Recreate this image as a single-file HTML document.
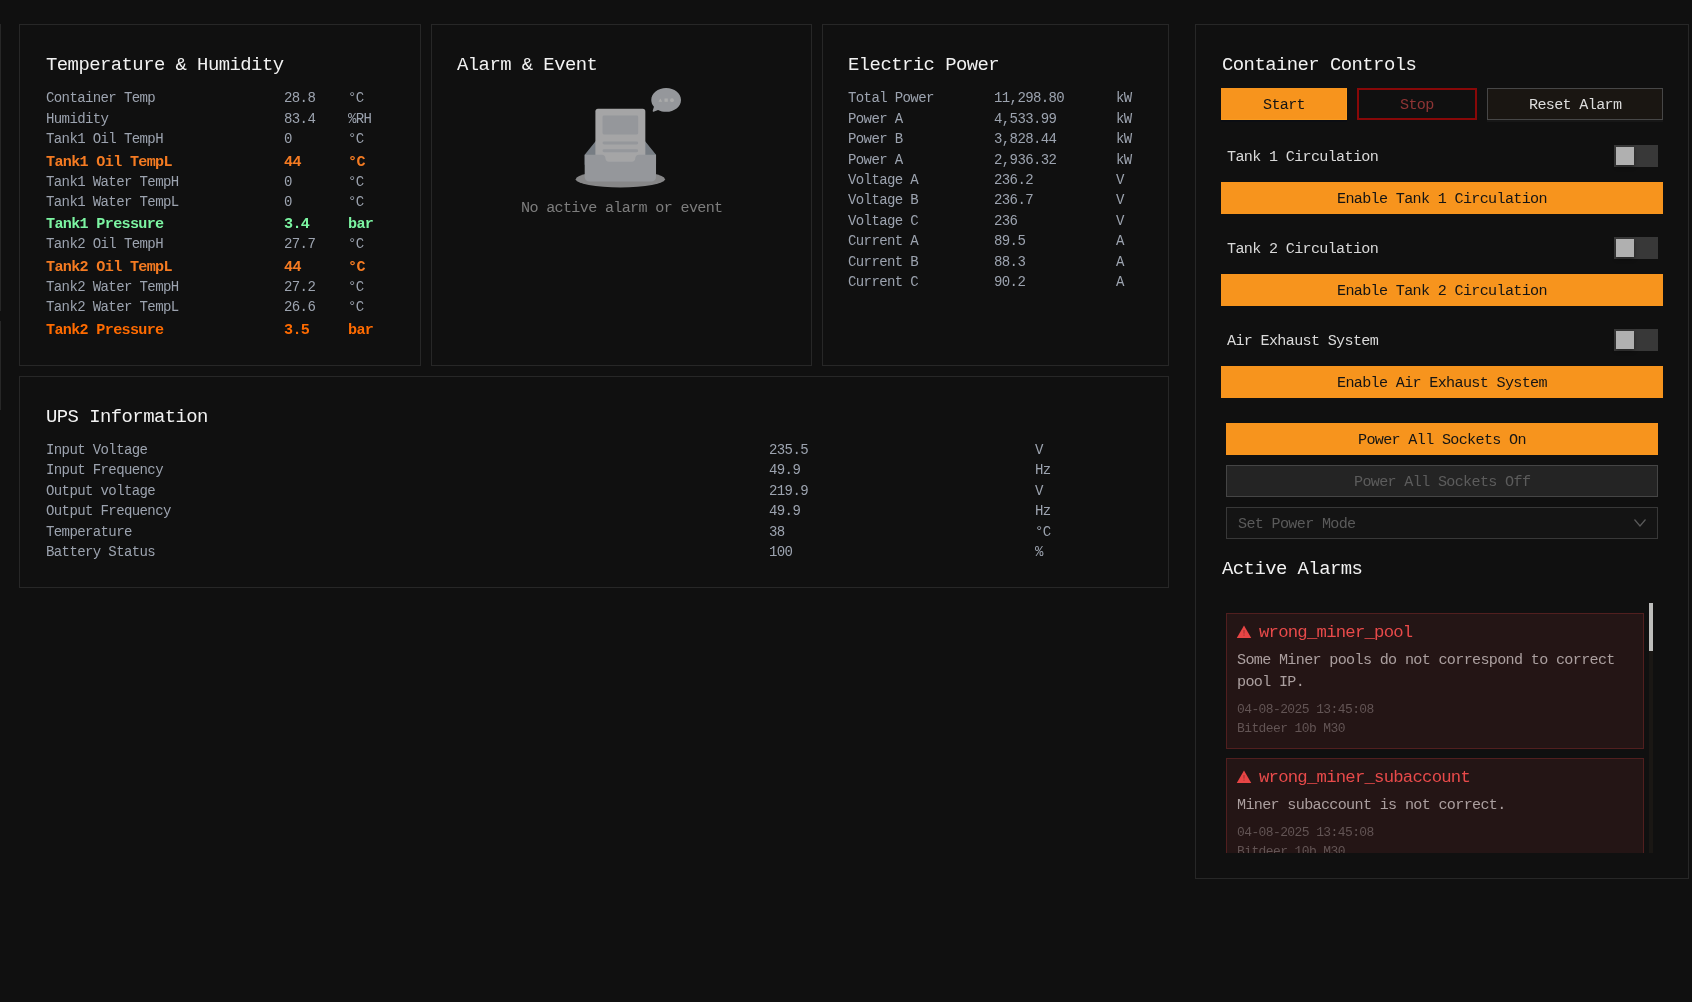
<!DOCTYPE html>
<html><head><meta charset="utf-8"><style>
html,body{margin:0;padding:0;background:#101010;width:1692px;height:1002px;overflow:hidden}
.t{position:absolute;white-space:pre;font-family:'Liberation Mono', monospace;will-change:transform}
.b{position:absolute}
</style></head><body>
<div class="b" style="left:0px;top:24px;width:1px;height:287px;background:#272727"></div>
<div class="b" style="left:0px;top:321px;width:1px;height:89px;background:#272727"></div>
<div class="b" style="left:19px;top:24px;width:402px;height:342px;border:1px solid #272727;box-sizing:border-box"></div>
<div class="b" style="left:431px;top:24px;width:381px;height:342px;border:1px solid #272727;box-sizing:border-box"></div>
<div class="b" style="left:822px;top:24px;width:347px;height:342px;border:1px solid #272727;box-sizing:border-box"></div>
<div class="b" style="left:19px;top:376px;width:1150px;height:212px;border:1px solid #272727;box-sizing:border-box"></div>
<div class="b" style="left:1195px;top:24px;width:494px;height:855px;border:1px solid #272727;box-sizing:border-box"></div>
<div class="t" style="left:46px;top:54px;font-size:18.90px;line-height:23px;letter-spacing:-0.542px;color:#f2f2f2;font-weight:normal;">Temperature &amp; Humidity</div>
<div class="t" style="left:457px;top:54px;font-size:18.90px;line-height:23px;letter-spacing:-0.542px;color:#f2f2f2;font-weight:normal;">Alarm &amp; Event</div>
<div class="t" style="left:848px;top:54px;font-size:18.90px;line-height:23px;letter-spacing:-0.542px;color:#f2f2f2;font-weight:normal;">Electric Power</div>
<div class="t" style="left:1222px;top:54px;font-size:18.90px;line-height:23px;letter-spacing:-0.542px;color:#f2f2f2;font-weight:normal;">Container Controls</div>
<div class="t" style="left:46px;top:406px;font-size:18.90px;line-height:23px;letter-spacing:-0.542px;color:#f2f2f2;font-weight:normal;">UPS Information</div>
<div class="t" style="left:1222px;top:558px;font-size:18.90px;line-height:23px;letter-spacing:-0.542px;color:#f2f2f2;font-weight:normal;">Active Alarms</div>
<div class="t" style="left:46px;top:90px;font-size:14.04px;line-height:17px;letter-spacing:-0.625px;color:#9ca3af;font-weight:normal;">Container Temp</div>
<div class="t" style="left:284px;top:90px;font-size:14.04px;line-height:17px;letter-spacing:-0.625px;color:#9ca3af;font-weight:normal;">28.8</div>
<div class="t" style="left:348px;top:90px;font-size:14.04px;line-height:17px;letter-spacing:-0.625px;color:#9ca3af;font-weight:normal;">°C</div>
<div class="t" style="left:46px;top:111px;font-size:14.04px;line-height:17px;letter-spacing:-0.625px;color:#9ca3af;font-weight:normal;">Humidity</div>
<div class="t" style="left:284px;top:111px;font-size:14.04px;line-height:17px;letter-spacing:-0.625px;color:#9ca3af;font-weight:normal;">83.4</div>
<div class="t" style="left:348px;top:111px;font-size:14.04px;line-height:17px;letter-spacing:-0.625px;color:#9ca3af;font-weight:normal;">%RH</div>
<div class="t" style="left:46px;top:131px;font-size:14.04px;line-height:17px;letter-spacing:-0.625px;color:#9ca3af;font-weight:normal;">Tank1 Oil TempH</div>
<div class="t" style="left:284px;top:131px;font-size:14.04px;line-height:17px;letter-spacing:-0.625px;color:#9ca3af;font-weight:normal;">0</div>
<div class="t" style="left:348px;top:131px;font-size:14.04px;line-height:17px;letter-spacing:-0.625px;color:#9ca3af;font-weight:normal;">°C</div>
<div class="t" style="left:46px;top:153px;font-size:15.12px;line-height:18px;letter-spacing:-0.673px;color:#f57b22;font-weight:bold;">Tank1 Oil TempL</div>
<div class="t" style="left:284px;top:153px;font-size:15.12px;line-height:18px;letter-spacing:-0.673px;color:#f57b22;font-weight:bold;">44</div>
<div class="t" style="left:348px;top:153px;font-size:15.12px;line-height:18px;letter-spacing:-0.673px;color:#f57b22;font-weight:bold;">°C</div>
<div class="t" style="left:46px;top:174px;font-size:14.04px;line-height:17px;letter-spacing:-0.625px;color:#9ca3af;font-weight:normal;">Tank1 Water TempH</div>
<div class="t" style="left:284px;top:174px;font-size:14.04px;line-height:17px;letter-spacing:-0.625px;color:#9ca3af;font-weight:normal;">0</div>
<div class="t" style="left:348px;top:174px;font-size:14.04px;line-height:17px;letter-spacing:-0.625px;color:#9ca3af;font-weight:normal;">°C</div>
<div class="t" style="left:46px;top:194px;font-size:14.04px;line-height:17px;letter-spacing:-0.625px;color:#9ca3af;font-weight:normal;">Tank1 Water TempL</div>
<div class="t" style="left:284px;top:194px;font-size:14.04px;line-height:17px;letter-spacing:-0.625px;color:#9ca3af;font-weight:normal;">0</div>
<div class="t" style="left:348px;top:194px;font-size:14.04px;line-height:17px;letter-spacing:-0.625px;color:#9ca3af;font-weight:normal;">°C</div>
<div class="t" style="left:46px;top:215px;font-size:15.12px;line-height:18px;letter-spacing:-0.673px;color:#7cf5a2;font-weight:bold;">Tank1 Pressure</div>
<div class="t" style="left:284px;top:215px;font-size:15.12px;line-height:18px;letter-spacing:-0.673px;color:#7cf5a2;font-weight:bold;">3.4</div>
<div class="t" style="left:348px;top:215px;font-size:15.12px;line-height:18px;letter-spacing:-0.673px;color:#7cf5a2;font-weight:bold;">bar</div>
<div class="t" style="left:46px;top:236px;font-size:14.04px;line-height:17px;letter-spacing:-0.625px;color:#9ca3af;font-weight:normal;">Tank2 Oil TempH</div>
<div class="t" style="left:284px;top:236px;font-size:14.04px;line-height:17px;letter-spacing:-0.625px;color:#9ca3af;font-weight:normal;">27.7</div>
<div class="t" style="left:348px;top:236px;font-size:14.04px;line-height:17px;letter-spacing:-0.625px;color:#9ca3af;font-weight:normal;">°C</div>
<div class="t" style="left:46px;top:258px;font-size:15.12px;line-height:18px;letter-spacing:-0.673px;color:#f57b22;font-weight:bold;">Tank2 Oil TempL</div>
<div class="t" style="left:284px;top:258px;font-size:15.12px;line-height:18px;letter-spacing:-0.673px;color:#f57b22;font-weight:bold;">44</div>
<div class="t" style="left:348px;top:258px;font-size:15.12px;line-height:18px;letter-spacing:-0.673px;color:#f57b22;font-weight:bold;">°C</div>
<div class="t" style="left:46px;top:279px;font-size:14.04px;line-height:17px;letter-spacing:-0.625px;color:#9ca3af;font-weight:normal;">Tank2 Water TempH</div>
<div class="t" style="left:284px;top:279px;font-size:14.04px;line-height:17px;letter-spacing:-0.625px;color:#9ca3af;font-weight:normal;">27.2</div>
<div class="t" style="left:348px;top:279px;font-size:14.04px;line-height:17px;letter-spacing:-0.625px;color:#9ca3af;font-weight:normal;">°C</div>
<div class="t" style="left:46px;top:299px;font-size:14.04px;line-height:17px;letter-spacing:-0.625px;color:#9ca3af;font-weight:normal;">Tank2 Water TempL</div>
<div class="t" style="left:284px;top:299px;font-size:14.04px;line-height:17px;letter-spacing:-0.625px;color:#9ca3af;font-weight:normal;">26.6</div>
<div class="t" style="left:348px;top:299px;font-size:14.04px;line-height:17px;letter-spacing:-0.625px;color:#9ca3af;font-weight:normal;">°C</div>
<div class="t" style="left:46px;top:321px;font-size:15.12px;line-height:18px;letter-spacing:-0.673px;color:#ff6b00;font-weight:bold;">Tank2 Pressure</div>
<div class="t" style="left:284px;top:321px;font-size:15.12px;line-height:18px;letter-spacing:-0.673px;color:#ff6b00;font-weight:bold;">3.5</div>
<div class="t" style="left:348px;top:321px;font-size:15.12px;line-height:18px;letter-spacing:-0.673px;color:#ff6b00;font-weight:bold;">bar</div>
<div class="t" style="left:848px;top:90px;font-size:14.04px;line-height:17px;letter-spacing:-0.625px;color:#9ca3af;font-weight:normal;">Total Power</div>
<div class="t" style="left:994px;top:90px;font-size:14.04px;line-height:17px;letter-spacing:-0.625px;color:#9ca3af;font-weight:normal;">11,298.80</div>
<div class="t" style="left:1116px;top:90px;font-size:14.04px;line-height:17px;letter-spacing:-0.625px;color:#9ca3af;font-weight:normal;">kW</div>
<div class="t" style="left:848px;top:111px;font-size:14.04px;line-height:17px;letter-spacing:-0.625px;color:#9ca3af;font-weight:normal;">Power A</div>
<div class="t" style="left:994px;top:111px;font-size:14.04px;line-height:17px;letter-spacing:-0.625px;color:#9ca3af;font-weight:normal;">4,533.99</div>
<div class="t" style="left:1116px;top:111px;font-size:14.04px;line-height:17px;letter-spacing:-0.625px;color:#9ca3af;font-weight:normal;">kW</div>
<div class="t" style="left:848px;top:131px;font-size:14.04px;line-height:17px;letter-spacing:-0.625px;color:#9ca3af;font-weight:normal;">Power B</div>
<div class="t" style="left:994px;top:131px;font-size:14.04px;line-height:17px;letter-spacing:-0.625px;color:#9ca3af;font-weight:normal;">3,828.44</div>
<div class="t" style="left:1116px;top:131px;font-size:14.04px;line-height:17px;letter-spacing:-0.625px;color:#9ca3af;font-weight:normal;">kW</div>
<div class="t" style="left:848px;top:152px;font-size:14.04px;line-height:17px;letter-spacing:-0.625px;color:#9ca3af;font-weight:normal;">Power A</div>
<div class="t" style="left:994px;top:152px;font-size:14.04px;line-height:17px;letter-spacing:-0.625px;color:#9ca3af;font-weight:normal;">2,936.32</div>
<div class="t" style="left:1116px;top:152px;font-size:14.04px;line-height:17px;letter-spacing:-0.625px;color:#9ca3af;font-weight:normal;">kW</div>
<div class="t" style="left:848px;top:172px;font-size:14.04px;line-height:17px;letter-spacing:-0.625px;color:#9ca3af;font-weight:normal;">Voltage A</div>
<div class="t" style="left:994px;top:172px;font-size:14.04px;line-height:17px;letter-spacing:-0.625px;color:#9ca3af;font-weight:normal;">236.2</div>
<div class="t" style="left:1116px;top:172px;font-size:14.04px;line-height:17px;letter-spacing:-0.625px;color:#9ca3af;font-weight:normal;">V</div>
<div class="t" style="left:848px;top:192px;font-size:14.04px;line-height:17px;letter-spacing:-0.625px;color:#9ca3af;font-weight:normal;">Voltage B</div>
<div class="t" style="left:994px;top:192px;font-size:14.04px;line-height:17px;letter-spacing:-0.625px;color:#9ca3af;font-weight:normal;">236.7</div>
<div class="t" style="left:1116px;top:192px;font-size:14.04px;line-height:17px;letter-spacing:-0.625px;color:#9ca3af;font-weight:normal;">V</div>
<div class="t" style="left:848px;top:213px;font-size:14.04px;line-height:17px;letter-spacing:-0.625px;color:#9ca3af;font-weight:normal;">Voltage C</div>
<div class="t" style="left:994px;top:213px;font-size:14.04px;line-height:17px;letter-spacing:-0.625px;color:#9ca3af;font-weight:normal;">236</div>
<div class="t" style="left:1116px;top:213px;font-size:14.04px;line-height:17px;letter-spacing:-0.625px;color:#9ca3af;font-weight:normal;">V</div>
<div class="t" style="left:848px;top:233px;font-size:14.04px;line-height:17px;letter-spacing:-0.625px;color:#9ca3af;font-weight:normal;">Current A</div>
<div class="t" style="left:994px;top:233px;font-size:14.04px;line-height:17px;letter-spacing:-0.625px;color:#9ca3af;font-weight:normal;">89.5</div>
<div class="t" style="left:1116px;top:233px;font-size:14.04px;line-height:17px;letter-spacing:-0.625px;color:#9ca3af;font-weight:normal;">A</div>
<div class="t" style="left:848px;top:254px;font-size:14.04px;line-height:17px;letter-spacing:-0.625px;color:#9ca3af;font-weight:normal;">Current B</div>
<div class="t" style="left:994px;top:254px;font-size:14.04px;line-height:17px;letter-spacing:-0.625px;color:#9ca3af;font-weight:normal;">88.3</div>
<div class="t" style="left:1116px;top:254px;font-size:14.04px;line-height:17px;letter-spacing:-0.625px;color:#9ca3af;font-weight:normal;">A</div>
<div class="t" style="left:848px;top:274px;font-size:14.04px;line-height:17px;letter-spacing:-0.625px;color:#9ca3af;font-weight:normal;">Current C</div>
<div class="t" style="left:994px;top:274px;font-size:14.04px;line-height:17px;letter-spacing:-0.625px;color:#9ca3af;font-weight:normal;">90.2</div>
<div class="t" style="left:1116px;top:274px;font-size:14.04px;line-height:17px;letter-spacing:-0.625px;color:#9ca3af;font-weight:normal;">A</div>
<div class="t" style="left:46px;top:442px;font-size:14.04px;line-height:17px;letter-spacing:-0.625px;color:#9ca3af;font-weight:normal;">Input Voltage</div>
<div class="t" style="left:769px;top:442px;font-size:14.04px;line-height:17px;letter-spacing:-0.625px;color:#9ca3af;font-weight:normal;">235.5</div>
<div class="t" style="left:1035px;top:442px;font-size:14.04px;line-height:17px;letter-spacing:-0.625px;color:#9ca3af;font-weight:normal;">V</div>
<div class="t" style="left:46px;top:462px;font-size:14.04px;line-height:17px;letter-spacing:-0.625px;color:#9ca3af;font-weight:normal;">Input Frequency</div>
<div class="t" style="left:769px;top:462px;font-size:14.04px;line-height:17px;letter-spacing:-0.625px;color:#9ca3af;font-weight:normal;">49.9</div>
<div class="t" style="left:1035px;top:462px;font-size:14.04px;line-height:17px;letter-spacing:-0.625px;color:#9ca3af;font-weight:normal;">Hz</div>
<div class="t" style="left:46px;top:483px;font-size:14.04px;line-height:17px;letter-spacing:-0.625px;color:#9ca3af;font-weight:normal;">Output voltage</div>
<div class="t" style="left:769px;top:483px;font-size:14.04px;line-height:17px;letter-spacing:-0.625px;color:#9ca3af;font-weight:normal;">219.9</div>
<div class="t" style="left:1035px;top:483px;font-size:14.04px;line-height:17px;letter-spacing:-0.625px;color:#9ca3af;font-weight:normal;">V</div>
<div class="t" style="left:46px;top:503px;font-size:14.04px;line-height:17px;letter-spacing:-0.625px;color:#9ca3af;font-weight:normal;">Output Frequency</div>
<div class="t" style="left:769px;top:503px;font-size:14.04px;line-height:17px;letter-spacing:-0.625px;color:#9ca3af;font-weight:normal;">49.9</div>
<div class="t" style="left:1035px;top:503px;font-size:14.04px;line-height:17px;letter-spacing:-0.625px;color:#9ca3af;font-weight:normal;">Hz</div>
<div class="t" style="left:46px;top:524px;font-size:14.04px;line-height:17px;letter-spacing:-0.625px;color:#9ca3af;font-weight:normal;">Temperature</div>
<div class="t" style="left:769px;top:524px;font-size:14.04px;line-height:17px;letter-spacing:-0.625px;color:#9ca3af;font-weight:normal;">38</div>
<div class="t" style="left:1035px;top:524px;font-size:14.04px;line-height:17px;letter-spacing:-0.625px;color:#9ca3af;font-weight:normal;">°C</div>
<div class="t" style="left:46px;top:544px;font-size:14.04px;line-height:17px;letter-spacing:-0.625px;color:#9ca3af;font-weight:normal;">Battery Status</div>
<div class="t" style="left:769px;top:544px;font-size:14.04px;line-height:17px;letter-spacing:-0.625px;color:#9ca3af;font-weight:normal;">100</div>
<div class="t" style="left:1035px;top:544px;font-size:14.04px;line-height:17px;letter-spacing:-0.625px;color:#9ca3af;font-weight:normal;">%</div>
<svg class="b" style="left:560.3px;top:88px" width="121" height="100" viewBox="0 0 184 152"><g fill="none" fill-rule="evenodd" opacity="0.65"><g transform="translate(24 31.67)"><ellipse fill-opacity=".8" fill="#F5F5F7" cx="67.797" cy="106.89" rx="67.797" ry="12.668"/><path d="M122.034 69.674L98.109 40.229c-1.148-1.386-2.826-2.225-4.593-2.225h-51.44c-1.766 0-3.444.839-4.592 2.225L13.56 69.674v15.383h108.475V69.674z" fill="#AEB8C2"/><path d="M101.537 86.214L80.63 61.102c-1.001-1.207-2.507-1.867-4.048-1.867H31.724c-1.54 0-3.047.66-4.048 1.867L6.769 86.214v13.792h94.768V86.214z" fill="#AEB8C2" transform="translate(13.56)"/><path d="M33.83 0h67.933a4 4 0 0 1 4 4v93.344a4 4 0 0 1-4 4H33.83a4 4 0 0 1-4-4V4a4 4 0 0 1 4-4z" fill="#F5F5F7"/><path d="M42.678 9.953h50.237a2 2 0 0 1 2 2V36.91a2 2 0 0 1-2 2H42.678a2 2 0 0 1-2-2V11.953a2 2 0 0 1 2-2zM42.94 49.767h49.713a2.262 2.262 0 1 1 0 4.524H42.94a2.262 2.262 0 0 1 0-4.524zM42.94 61.53h49.713a2.262 2.262 0 1 1 0 4.525H42.94a2.262 2.262 0 0 1 0-4.525zM121.813 105.032c-.775 3.071-3.497 5.36-6.735 5.36H20.515c-3.238 0-5.96-2.29-6.734-5.36a7.309 7.309 0 0 1-.222-1.79V69.675h26.318c2.907 0 5.25 2.448 5.25 5.42v.04c0 2.971 2.37 5.37 5.277 5.37h34.785c2.907 0 5.277-2.421 5.277-5.393V75.1c0-2.972 2.343-5.426 5.25-5.426h26.318v33.569c0 .617-.077 1.216-.221 1.789z" fill="#DCE0E6"/></g><path d="M149.121 33.292l-6.83 2.65a1 1 0 0 1-1.317-1.23l1.937-6.207c-2.589-2.944-4.109-6.534-4.109-10.408C138.802 8.102 148.92 0 161.402 0 173.881 0 184 8.102 184 18.097c0 9.995-10.118 18.097-22.599 18.097-4.528 0-8.744-1.066-12.28-2.902z" fill="#DCE0E6"/><g transform="translate(149.65 15.383)" fill="#FFF"><ellipse cx="20.654" cy="3.167" rx="2.849" ry="2.815"/><path d="M5.698 5.63H0L2.898.704zM9.259.704h4.985V5.63H9.259z"/></g></g></svg>
<div class="t" style="left:521px;top:199px;font-size:15.12px;line-height:18px;letter-spacing:-0.673px;color:#7d7d7d;font-weight:normal;">No active alarm or event</div>
<div class="b" style="left:1221px;top:88px;width:126px;height:32px;background:#f7941d;border:1px solid #fb9c20;border-top-color:#f7941d;border-left-color:#f7941d;box-sizing:border-box;box-shadow:0 2px 0 rgba(5,10,20,0.5)"></div>
<div class="t" style="left:1263.0px;top:96px;font-size:15.12px;line-height:18px;letter-spacing:-0.673px;color:#141414;font-weight:normal;">Start</div>
<div class="b" style="left:1357px;top:88px;width:120px;height:32px;border:2px solid #880808;box-sizing:border-box"></div>
<div class="t" style="left:1400.25px;top:96px;font-size:15.12px;line-height:18px;letter-spacing:-0.673px;color:#8f3535;font-weight:normal;">Stop</div>
<div class="b" style="left:1487px;top:88px;width:176px;height:32px;border:1px solid #474747;background:#1a1612;box-sizing:border-box;box-shadow:0 2px 0 rgba(255,255,255,0.03)"></div>
<div class="t" style="left:1528.75px;top:96px;font-size:15.12px;line-height:18px;letter-spacing:-0.673px;color:#dcdcdc;font-weight:normal;">Reset Alarm</div>
<div class="t" style="left:1227px;top:148px;font-size:15.12px;line-height:18px;letter-spacing:-0.673px;color:#d9d9d9;font-weight:normal;">Tank 1 Circulation</div>
<div class="b" style="left:1614px;top:145px;width:44px;height:22px;background:#383838"></div>
<div class="b" style="left:1616px;top:147px;width:18px;height:18px;background:#b0b0b0;box-shadow:0 2px 4px rgba(0,0,0,0.35)"></div>
<div class="b" style="left:1221px;top:182px;width:442px;height:32px;background:#f7941d"></div>
<div class="t" style="left:1337.0px;top:190px;font-size:15.12px;line-height:18px;letter-spacing:-0.673px;color:#141414;font-weight:normal;">Enable Tank 1 Circulation</div>
<div class="t" style="left:1227px;top:240px;font-size:15.12px;line-height:18px;letter-spacing:-0.673px;color:#d9d9d9;font-weight:normal;">Tank 2 Circulation</div>
<div class="b" style="left:1614px;top:237px;width:44px;height:22px;background:#383838"></div>
<div class="b" style="left:1616px;top:239px;width:18px;height:18px;background:#b0b0b0;box-shadow:0 2px 4px rgba(0,0,0,0.35)"></div>
<div class="b" style="left:1221px;top:274px;width:442px;height:32px;background:#f7941d"></div>
<div class="t" style="left:1337.0px;top:282px;font-size:15.12px;line-height:18px;letter-spacing:-0.673px;color:#141414;font-weight:normal;">Enable Tank 2 Circulation</div>
<div class="t" style="left:1227px;top:332px;font-size:15.12px;line-height:18px;letter-spacing:-0.673px;color:#d9d9d9;font-weight:normal;">Air Exhaust System</div>
<div class="b" style="left:1614px;top:329px;width:44px;height:22px;background:#383838"></div>
<div class="b" style="left:1616px;top:331px;width:18px;height:18px;background:#b0b0b0;box-shadow:0 2px 4px rgba(0,0,0,0.35)"></div>
<div class="b" style="left:1221px;top:366px;width:442px;height:32px;background:#f7941d"></div>
<div class="t" style="left:1337.0px;top:374px;font-size:15.12px;line-height:18px;letter-spacing:-0.673px;color:#141414;font-weight:normal;">Enable Air Exhaust System</div>
<div class="b" style="left:1226px;top:423px;width:432px;height:32px;background:#f7941d"></div>
<div class="t" style="left:1358.0px;top:431px;font-size:15.12px;line-height:18px;letter-spacing:-0.673px;color:#141414;font-weight:normal;">Power All Sockets On</div>
<div class="b" style="left:1226px;top:465px;width:432px;height:32px;background:#242424;border:1px solid #454545;box-sizing:border-box"></div>
<div class="t" style="left:1353.75px;top:473px;font-size:15.12px;line-height:18px;letter-spacing:-0.673px;color:#5c5c5c;font-weight:normal;">Power All Sockets Off</div>
<div class="b" style="left:1226px;top:507px;width:432px;height:32px;background:#141414;border:1px solid #383838;box-sizing:border-box"></div>
<div class="t" style="left:1238px;top:515px;font-size:15.12px;line-height:18px;letter-spacing:-0.673px;color:#5a5a5a;font-weight:normal;">Set Power Mode</div>
<svg class="b" style="left:1633px;top:517px" width="14" height="12" viewBox="0 0 14 12"><path d="M1.5 2.5 L7 9 L12.5 2.5" fill="none" stroke="#5a5a5a" stroke-width="1.2"/></svg>
<div class="b" style="left:1226px;top:603px;width:428px;height:250px;overflow:hidden">
<div class="b" style="left:423px;top:0px;width:4px;height:250px;background:#1a1714"></div>
<div class="b" style="left:423px;top:0px;width:4px;height:48px;background:#bdbdbb"></div>
<div class="b" style="left:0px;top:10px;width:418px;height:136px;background:#241515;border:1px solid #511f1f;box-sizing:border-box"></div>
<div class="b" style="left:0px;top:155px;width:418px;height:140px;background:#241515;border:1px solid #511f1f;box-sizing:border-box"></div>
</div>
<div class="b" style="left:0;top:0;width:1692px;height:853px;overflow:hidden">
<div class="b" style="left:1236px;top:625px;line-height:0"><svg width="16" height="14" viewBox="0 0 16 14"><path d="M8 0.5 L15.25 13 H0.75 Z" fill="#e84545"/><rect x="7.5" y="5" width="1" height="3.6" fill="#9a3030"/><rect x="7.5" y="9.6" width="1" height="1.1" fill="#9a3030"/></svg></div>
<div class="t" style="left:1259px;top:622px;font-size:17.28px;line-height:21px;letter-spacing:-0.770px;color:#e84a4a;font-weight:normal;">wrong_miner_pool</div>
<div class="t" style="left:1237px;top:651px;font-size:15.12px;line-height:18px;letter-spacing:-0.673px;color:#ab9f9f;font-weight:normal;">Some Miner pools do not correspond to correct</div>
<div class="t" style="left:1237px;top:673px;font-size:15.12px;line-height:18px;letter-spacing:-0.673px;color:#ab9f9f;font-weight:normal;">pool IP.</div>
<div class="t" style="left:1237px;top:702px;font-size:12.96px;line-height:16px;letter-spacing:-0.577px;color:#625454;font-weight:normal;">04-08-2025 13:45:08</div>
<div class="t" style="left:1237px;top:721px;font-size:12.96px;line-height:16px;letter-spacing:-0.577px;color:#625454;font-weight:normal;">Bitdeer 10b M30</div>
<div class="b" style="left:1236px;top:770px;line-height:0"><svg width="16" height="14" viewBox="0 0 16 14"><path d="M8 0.5 L15.25 13 H0.75 Z" fill="#e84545"/><rect x="7.5" y="5" width="1" height="3.6" fill="#9a3030"/><rect x="7.5" y="9.6" width="1" height="1.1" fill="#9a3030"/></svg></div>
<div class="t" style="left:1259px;top:767px;font-size:17.28px;line-height:21px;letter-spacing:-0.770px;color:#e84a4a;font-weight:normal;">wrong_miner_subaccount</div>
<div class="t" style="left:1237px;top:796px;font-size:15.12px;line-height:18px;letter-spacing:-0.673px;color:#ab9f9f;font-weight:normal;">Miner subaccount is not correct.</div>
<div class="t" style="left:1237px;top:825px;font-size:12.96px;line-height:16px;letter-spacing:-0.577px;color:#625454;font-weight:normal;">04-08-2025 13:45:08</div>
<div class="t" style="left:1237px;top:844px;font-size:12.96px;line-height:16px;letter-spacing:-0.577px;color:#625454;font-weight:normal;">Bitdeer 10b M30</div>
</div>
</body></html>
